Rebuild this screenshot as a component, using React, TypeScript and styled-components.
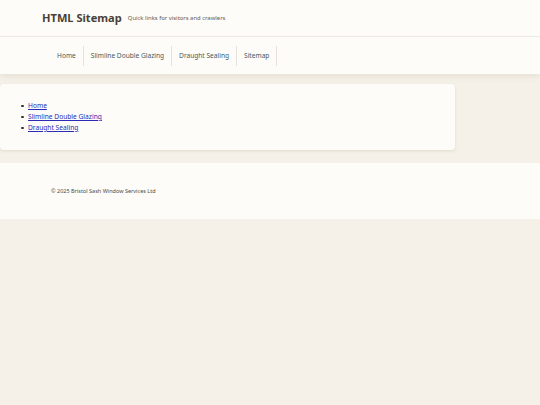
import React from "react";
import styled, { createGlobalStyle } from "styled-components";

const Global = createGlobalStyle`
  html, body { margin: 0; padding: 0; }
  body {
    background: #f5f1e8;
    font-family: "Noto Sans", "Open Sans", sans-serif;
    color: #333;
  }
`;

const Header = styled.header`
  background: #fdfcf8;
  box-shadow: 0 2px 6px rgba(120, 100, 70, 0.12);
`;

const Brand = styled.div`
  height: 37px;
  box-sizing: border-box;
  display: flex;
  align-items: center;
  gap: 6px;
  padding: 0 0 2px 42px;
  border-bottom: 1px solid #ece9e2;
`;

const Title = styled.h1`
  margin: 0;
  font-size: 11.1px;
  font-weight: 700;
  color: #4a3f36;
`;

const Tagline = styled.span`
  font-size: 5.9px;
  color: #5e5954;
  padding-top: 1px;
`;

const Nav = styled.nav`
  height: 37px;
  display: flex;
  align-items: center;
  padding-left: 50px;
`;

const NavItem = styled.a`
  font-size: 6.6px;
  color: #3f5b60;
  text-decoration: none;
  padding: 0 7px;
  height: 20px;
  display: flex;
  align-items: center;
  border-right: 1px solid #e6e3dc;
`;

const Main = styled.main`
  padding: 10px 0 13px;
`;

const Card = styled.section`
  width: 455px;
  box-sizing: border-box;
  background: #fdfcf8;
  border-radius: 4px;
  box-shadow: 0 1px 3px rgba(120, 100, 70, 0.15);
  padding: 16px 8px 17px;
`;

const List = styled.ul`
  margin: 0;
  padding-left: 20px;
  list-style: none;
  font-size: 6.65px;
  line-height: 11px;
`;

const Item = styled.li`
  position: relative;
  &::before {
    content: "";
    position: absolute;
    left: -7px;
    top: 4.5px;
    width: 2.5px;
    height: 2.5px;
    border-radius: 50%;
    background: #333;
  }
`;

const Link = styled.a`
  color: #2b2bb8;
`;

const Footer = styled.footer`
  background: #fdfcf8;
  height: 56px;
  display: flex;
  align-items: center;
  padding-left: 51px;
`;

const Copy = styled.p`
  margin: 0;
  font-size: 5.5px;
  color: #4a4a4a;
`;

const navItems = ["Home", "Slimline Double Glazing", "Draught Sealing", "Sitemap"];
const links = ["Home", "Slimline Double Glazing", "Draught Sealing"];

export default function App() {
  return (
    <>
      <Global />
      <Header>
        <Brand>
          <Title>HTML Sitemap</Title>
          <Tagline>Quick links for visitors and crawlers</Tagline>
        </Brand>
        <Nav>
          {navItems.map((n) => (
            <NavItem key={n} href="#">{n}</NavItem>
          ))}
        </Nav>
      </Header>
      <Main>
        <Card>
          <List>
            {links.map((l) => (
              <Item key={l}><Link href="#">{l}</Link></Item>
            ))}
          </List>
        </Card>
      </Main>
      <Footer>
        <Copy>© 2025 Bristol Sash Window Services Ltd</Copy>
      </Footer>
    </>
  );
}
